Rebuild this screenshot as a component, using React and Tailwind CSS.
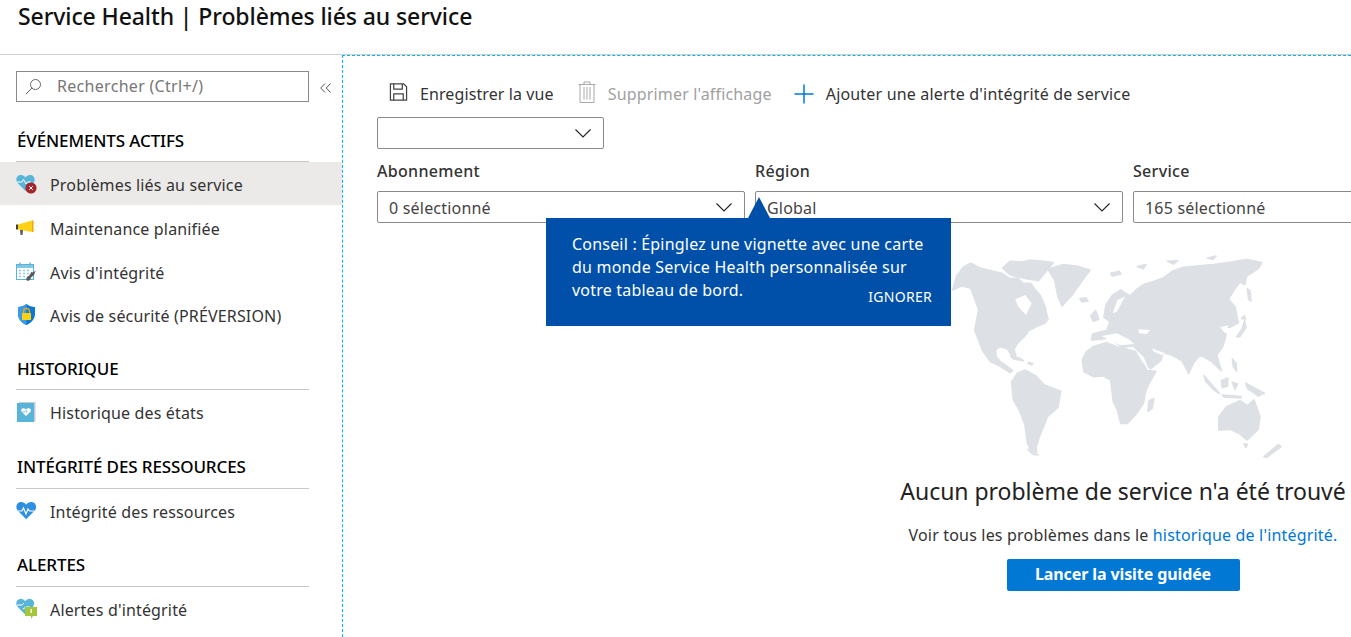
import React from "react";

const font = { fontFamily: '"Noto Sans", sans-serif' };

const Heart = ({ fill = "#59b4d9", x = 0, y = 0, s = 1 }) => (
  <path
    transform={`translate(${x} ${y}) scale(${s})`}
    d="M10 18 L1.6 9.4 C-0.8 6.6 0.2 1.6 4.4 1 C6.8 0.7 8.8 1.8 10 3.6 C11.2 1.8 13.2 0.7 15.6 1 C19.8 1.6 20.8 6.6 18.4 9.4 Z"
    fill={fill}
  />
);

const IconProblem = () => (
  <svg width="21" height="20" viewBox="0 0 21 20" className="shrink-0">
    <Heart fill="#59b4d9" s={0.95} />
    <path d="M1 8h5l1.5-2.5L10 10l1.5-2H15" stroke="#fff" strokeWidth="1" fill="none" />
    <circle cx="15" cy="14" r="5.6" fill="#a4262c" />
    <path d="M13.2 12.2l3.6 3.6M16.8 12.2l-3.6 3.6" stroke="#fff" strokeWidth="1" />
  </svg>
);

const IconMega = () => (
  <svg width="21" height="16" viewBox="0 0 21 16" className="shrink-0">
    <path d="M0 4.5 H2 V9.5 H0 Z" fill="#3e3e3e" />
    <path d="M2 4.5 L16 0.5 V12 L2 9.5 Z" fill="#fcd116" />
    <path d="M16 0.5 h1.5 V12 H16 Z" fill="#e8a90e" />
    <path d="M4 10 h3 l-0.5 5 h-2 Z" fill="#5a5a5a" />
    <path d="M19 2.5v1M20 6h1M19 9v1" stroke="#f2cf82" strokeWidth="1" />
  </svg>
);

const IconCal = () => (
  <svg width="21" height="20" viewBox="0 0 21 20" className="shrink-0">
    <rect x="0.5" y="2.5" width="17" height="15" fill="#fff" stroke="#59b4d9" />
    <rect x="0" y="2" width="18" height="4" fill="#59b4d9" opacity="0.75" />
    <path d="M4 0.5v3M14 0.5v3" stroke="#59b4d9" strokeWidth="1.4" />
    <path d="M3 8.5h2M7 8.5h2M11 8.5h2M3 11.5h2M7 11.5h2M11 11.5h2M3 14.5h2M7 14.5h2" stroke="#8fcde6" strokeWidth="1.4" />
    <path d="M19.8 8.5 L17 10.5 L15.5 9.8 L13.5 13.2 L11 15 L10 17.5 L11.5 19 L14 18 L15 15.5 L18 13 L18.5 11.5 Z" fill="#5a5a5a" />
  </svg>
);

const IconShield = () => (
  <svg width="21" height="21" viewBox="0 0 21 21" className="shrink-0">
    <path d="M10.5 0 C13 2 16 3 19 3 V10 C19 15 15 19 10.5 21 C6 19 2 15 2 10 V3 C5 3 8 2 10.5 0 Z" fill="#0a78d4" />
    <path d="M10.5 0 C8 2 5 3 2 3 V10 C2 15 6 19 10.5 21 Z" fill="#3b9be6" />
    <path d="M7.5 9 V7.5 a3 3 0 0 1 6 0 V9" stroke="#e8a90e" strokeWidth="1.3" fill="none" />
    <rect x="6" y="9" width="9" height="7" rx="0.6" fill="#fcd116" />
  </svg>
);

const IconBook = () => (
  <svg width="20" height="20" viewBox="0 0 20 20" className="shrink-0">
    <rect x="3" y="0" width="16.5" height="19.5" fill="#c8ccd0" />
    <rect x="1" y="1" width="17" height="19" fill="#59b4d9" />
    <g transform="translate(5 6)">
      <path d="M5 8 L0.8 4 C-0.4 2.6 0 0.4 2 0.2 C3.2 0 4.4 0.6 5 1.6 C5.6 0.6 6.8 0 8 0.2 C10 0.4 10.4 2.6 9.2 4 Z" fill="#fff" />
      <path d="M1 4h2.5L5 2.5 6 4.5" stroke="#59b4d9" strokeWidth="0.8" fill="none" />
    </g>
  </svg>
);

const IconPulse = () => (
  <svg width="21" height="19" viewBox="0 0 21 19" className="shrink-0">
    <Heart fill="#2f8fe3" s={1.02} />
    <path d="M2 10h4l1.5-3 2.5 6 2-5 1.5 2H18" stroke="#fff" strokeWidth="1.2" fill="none" />
  </svg>
);

const IconAlert = () => (
  <svg width="21" height="21" viewBox="0 0 21 21" className="shrink-0">
    <Heart fill="#59b4d9" s={0.92} />
    <path d="M1 7h5l2-2M7 11l3-2h4" stroke="#fff" strokeWidth="1" fill="none" />
    <path d="M9 9 H21 V18 H17 L15 21 V18 H9 Z" fill="#a4c639" />
    <rect x="14.5" y="11" width="1.4" height="4" fill="#fff" />
  </svg>
);

const Row = ({ icon, children, active, h = "h-[43px]" }) => (
  <div className={`${h} flex items-center text-[16px] text-[#333] tracking-[0.16px] ${active ? "bg-[#ebeae8]" : ""}`}>
    <span className="w-[50px] pl-[16px] flex shrink-0">{icon}</span>
    <span className="pt-[2px]">{children}</span>
  </div>
);

const SectionHead = ({ children, className = "", tight }) => (
  <div className={`ml-[16px] w-[292px] ${tight ? "h-[30px] pb-[6px]" : "h-[31px] pb-[5px]"} flex items-center border-b border-[#c8c8c8] pl-[1px] text-[17px] text-black font-medium tracking-[-0.12px] whitespace-nowrap box-content ${className}`}>
    {children}
  </div>
);

const Chevron = () => (
  <svg width="16" height="9" viewBox="0 0 16 9" fill="none" stroke="#222" strokeWidth="1.1">
    <path d="M0.5 0.5 L8 8 L15.5 0.5" />
  </svg>
);

const Select = ({ w, value }) => (
  <div className={`${w} h-[32px] shrink-0 border border-[#8a8a8a] rounded-[2px] flex items-center justify-between pl-[11px] pr-[12px] text-[16px] text-[#444] tracking-[0.2px]`}>
    <span className="pt-[1px]">{value}</span>
    <Chevron />
  </div>
);

const Field = ({ label, value }) => (
  <div className="w-[368px] shrink-0">
    <div className="h-[42px] flex items-center pt-[2px] text-[16px] text-[#333] font-medium tracking-[0.3px]">{label}</div>
    <Select w="w-[368px]" value={value} />
  </div>
);

const WorldMap = () => (
  <svg width="421" height="230" viewBox="0 0 1263 690" className="block ml-[34px]" fill="#dde0e5" stroke="#dde0e5" strokeWidth="5" strokeLinejoin="round">
    {/* North America */}
    <path d="M68 150 L80 108 L100 82 L122 70 L150 84 L190 94 L215 100 L240 116 L262 114 L280 130 L302 130 L318 152 L332 168 L345 200 L354 238 L344 250 L315 262 L296 272 L285 288 L262 310 L252 328 L258 350 L246 350 L232 326 L210 320 L197 328 L198 350 L212 366 L224 374 L248 392 L240 398 L210 378 L182 365 L158 332 L134 270 L146 210 L132 170 L122 144 L94 138 Z" />
    {/* Arctic Canada */}
    <path d="M218 84 L240 64 L275 66 L300 60 L340 64 L370 68 L352 90 L325 122 L290 116 L262 110 L240 104 Z" />
    {/* Greenland */}
    <path d="M354 88 L400 74 L440 78 L480 90 L458 120 L426 165 L396 198 L384 170 L374 120 Z" />
    <path d="M450 176 L468 174 L474 183 L456 186 Z" />
    {/* Caribbean */}
    <path d="M242 350 L270 355 L280 362 L252 357 Z M294 368 L308 370 L306 374 L296 372 Z" />
    {/* South America */}
    <path d="M245 426 L262 400 L285 390 L318 408 L342 434 L392 454 L384 502 L352 530 L344 552 L330 585 L318 622 L320 638 L304 634 L292 608 L285 555 L268 510 L250 480 Z" />
    {/* Africa */}
    <path d="M457 358 L470 335 L490 320 L530 308 L565 322 L616 334 L630 360 L652 392 L678 394 L660 425 L648 450 L640 490 L620 520 L592 550 L572 550 L562 510 L550 485 L542 420 L520 408 L492 410 L462 395 Z" />
    <path d="M657 482 L672 476 L666 506 L654 514 Z" />
    {/* Eurasia */}
    <path d="M484 300 L488 282 L510 276 L530 272 L540 245 L522 232 L528 194 L548 165 L572 150 L600 168 L618 150 L640 134 L672 124 L700 114 L730 92 L760 82 L800 78 L850 74 L905 66 L950 58 L996 68 L985 86 L950 108 L944 134 L930 126 L912 150 L895 178 L915 200 L925 248 L900 262 L876 258 L888 285 L878 320 L860 345 L874 392 L842 362 L810 345 L790 370 L776 400 L756 362 L725 345 L700 338 L692 362 L662 386 L650 378 L630 345 L612 318 L575 322 L540 292 L510 298 Z" />
    <path d="M542 100 L568 94 L573 102 L547 108 Z M622 80 L648 74 L640 86 Z M712 64 L743 62 L730 72 Z M832 54 L858 48 L850 58 Z" />
    {/* Islands */}
    <path d="M482 228 L497 212 L506 238 L490 244 Z" />
    <path d="M952 147 L960 152 L963 183 L956 178 Z" />
    <path d="M920 290 L936 268 L944 242 L948 262 L930 290 Z M935 235 L943 227 L946 237 Z" />
    <path d="M907 357 L918 370 L920 393 L910 380 Z M822 407 L868 460 L852 450 L828 425 Z M877 465 L933 470 L933 474 L882 471 Z M874 422 L893 414 L893 438 L877 443 Z M907 427 L923 432 L915 448 Z M947 430 L1003 460 L985 468 L952 445 Z" />
    {/* Australia */}
    <path d="M867 530 L890 500 L930 482 L952 497 L972 480 L990 530 L984 568 L952 600 L930 582 L900 568 L866 570 Z" />
    <path d="M942 612 L952 612 L948 622 Z" />
    <path d="M1002 650 L1045 614 L1053 620 L1010 652 Z" />
    <path d="M294 628 L306 640 L324 645 L310 643 Z" />
    {/* Water */}
    <g fill="#fff" stroke="none">
      <path d="M256 178 L285 165 L305 190 L288 225 L265 200 Z" />
      <path d="M515 288 L560 280 L600 300 L612 312 L570 316 L540 300 Z" />
      <path d="M625 268 L660 270 L650 282 L628 280 Z" />
      <path d="M614 326 L650 380 L656 385 L640 350 Z" />
      <path d="M665 325 L705 340 L695 345 L672 335 Z" />
      <path d="M562 180 L585 170 L560 215 L548 220 Z" />
      <path d="M870 262 L895 256 L885 280 Z" />
    </g>
  </svg>
);

export default function App() {
  return (
    <div className="w-[1351px] h-[637px] overflow-hidden bg-white flex flex-col" style={font}>
      <header className="h-[55px] shrink-0 border-b border-[#d0d0d0] pl-[18px] pt-[1px] text-[23px] text-[#111] font-medium tracking-[-0.1px] leading-[30px] whitespace-nowrap">
        Service Health | Problèmes liés au service
      </header>
      <div className="flex flex-1 min-h-0">
        <aside className="w-[342px] shrink-0 pt-[16px]">
          <div className="flex items-center">
            <div className="ml-[16px] w-[293px] h-[31px] border border-[#8a8a8a] flex items-center pb-[2px] text-[16px] text-[#777] tracking-[0.3px]">
              <svg width="17" height="17" viewBox="0 0 17 17" fill="none" stroke="#666" strokeWidth="1" className="ml-[8px] mr-[15px] mt-[2px]">
                <circle cx="10.5" cy="6.5" r="5" />
                <path d="M7 10 L1 16" />
              </svg>
              Rechercher (Ctrl+/)
            </div>
            <svg width="11" height="10" viewBox="0 0 11 10" fill="none" stroke="#555" strokeWidth="1" className="ml-[11px] mt-[3px]">
              <path d="M5 0.5 L0.8 5 L5 9.5 M10.5 0.5 L6.2 5 L10.5 9.5" />
            </svg>
          </div>
          <SectionHead className="mt-[23px]">ÉVÉNEMENTS ACTIFS</SectionHead>
          <Row icon={<IconProblem />} active>Problèmes liés au service</Row>
          <Row icon={<IconMega />} h="h-[45px]">Maintenance planifiée</Row>
          <Row icon={<IconCal />}>Avis d'intégrité</Row>
          <Row icon={<IconShield />}>Avis de sécurité (PRÉVERSION)</Row>
          <SectionHead className="mt-[17px]">HISTORIQUE</SectionHead>
          <Row icon={<IconBook />}>Historique des états</Row>
          <SectionHead className="mt-[19px]" tight>INTÉGRITÉ DES RESSOURCES</SectionHead>
          <Row icon={<IconPulse />}>Intégrité des ressources</Row>
          <SectionHead className="mt-[18px]" tight>ALERTES</SectionHead>
          <Row icon={<IconAlert />}>Alertes d'intégrité</Row>
        </aside>
        <main className="relative flex-1 min-w-0 overflow-hidden border-l border-t border-dashed border-[#00b7f0] pl-[34px]">
          <div className="h-[61px] pt-[22px] flex items-start text-[16px] tracking-[0.1px]">
            <div className="ml-[12px] flex items-center h-[32px] text-[#333]">
              <svg width="19" height="20" viewBox="0 0 20 20" fill="none" stroke="#444" strokeWidth="1.3" className="mr-[12px] -mt-[4px]">
                <path d="M1.5 1.5 H15.5 L18.5 4.5 V18.5 H1.5 Z" />
                <path d="M5 1.5 V7 H14 V1.5 M5 18.5 V12 H15 V18.5" />
              </svg>
              Enregistrer la vue
            </div>
            <div className="ml-[24px] flex items-center h-[32px] text-[#a0a0a0] tracking-[0.17px]">
              <svg width="18" height="22" viewBox="0 0 18 22" fill="none" stroke="#a8a8a8" strokeWidth="1" className="mr-[12px] -mt-[4px]">
                <path d="M0.5 3.5 H17.5 M6 3.5 V1 H12 V3.5 M2 3.5 V21.5 H16 V3.5 M6 6 V18.5 M9 6 V18.5 M12 6 V18.5" />
              </svg>
              Supprimer l'affichage
            </div>
            <div className="ml-[22px] flex items-center h-[32px] text-[#333] tracking-[0.18px]">
              <svg width="20" height="20" viewBox="0 0 20 20" fill="none" stroke="#0078d4" strokeWidth="1.5" className="mr-[12px] -mt-[1px]">
                <path d="M10 0.5 V19.5 M0.5 10 H19.5" />
              </svg>
              Ajouter une alerte d'intégrité de service
            </div>
          </div>
          <Select w="w-[227px]" value="" />
          <div className="flex gap-[10px]">
            <Field label="Abonnement" value="0 sélectionné" />
            <Field label="Région" value="Global" />
            <Field label="Service" value="165 sélectionné" />
          </div>
          <div className="ml-[506px] w-[480px] mt-[17px] flex flex-col items-center">
            <WorldMap />
            <div className="mt-[5px] text-[23px] leading-[32px] text-[#222] whitespace-nowrap tracking-[-0.03px]">Aucun problème de service n'a été trouvé</div>
            <div className="mt-[16px] text-[16px] leading-[24px] text-[#333] whitespace-nowrap tracking-[0.18px]">
              Voir tous les problèmes dans le <span className="text-[#0078d4]">historique de l'intégrité.</span>
            </div>
            <div className="mt-[12px] w-[233px] h-[32px] rounded-[2px] bg-[#0078d4] text-white text-[16px] font-bold flex items-center justify-center pb-[2px] tracking-[-0.1px]">
              Lancer la visite guidée
            </div>
          </div>
          {/* Tooltip */}
          <div className="absolute left-[203px] top-[162px] w-[405px] h-[108px] bg-[#0050a9] text-white text-[16px] leading-[23px] tracking-[0.2px] pl-[26px] pt-[15px]">
            <svg width="22" height="21" viewBox="0 0 22 21" className="absolute left-[202px] -top-[21px]">
              <path d="M11 0 L22 21 H0 Z" fill="#0050a9" />
            </svg>
            <div className="whitespace-nowrap">Conseil : Épinglez une vignette avec une carte</div>
            <div className="whitespace-nowrap">du monde Service Health personnalisée sur</div>
            <div className="whitespace-nowrap">votre tableau de bord.</div>
            <div className="absolute right-[19px] bottom-[20px] text-[14px] leading-[18px] tracking-[0.3px]">IGNORER</div>
          </div>
        </main>
      </div>
    </div>
  );
}
